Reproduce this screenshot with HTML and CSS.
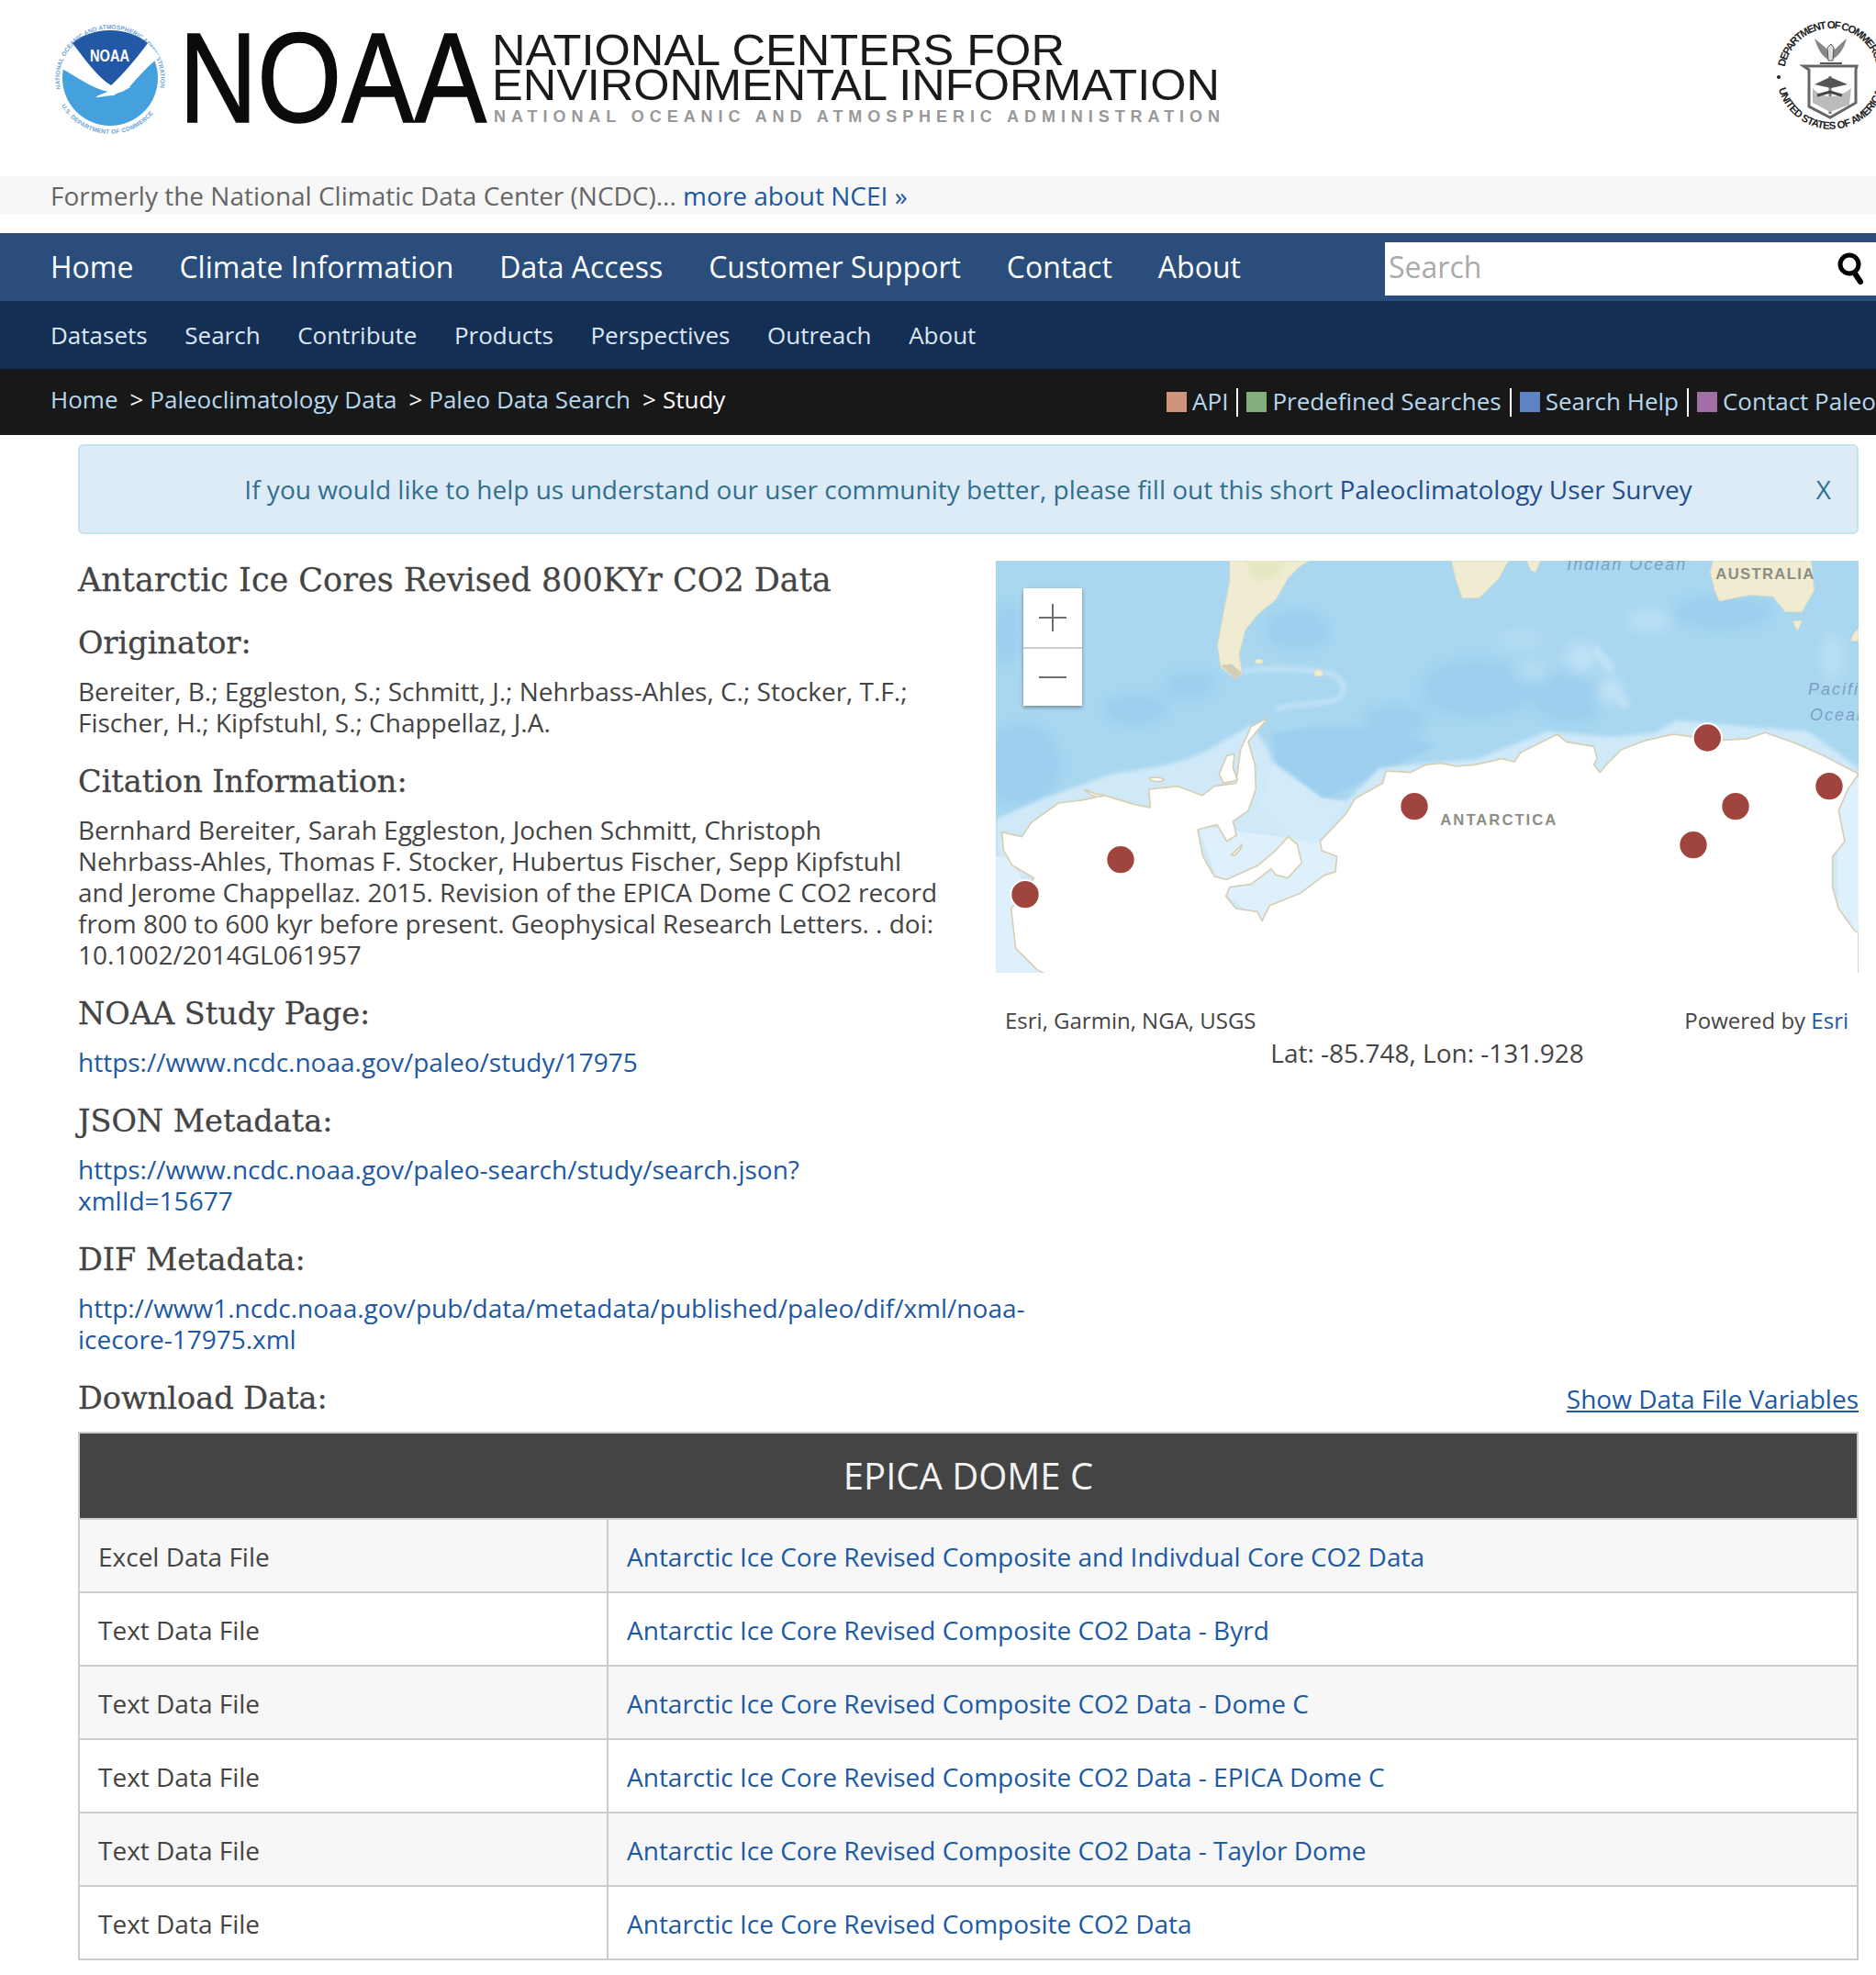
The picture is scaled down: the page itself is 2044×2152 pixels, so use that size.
FILE: index.html
```html
<!DOCTYPE html>
<html lang="en">
<head>
<meta charset="utf-8">
<title>Antarctic Ice Cores Revised 800KYr CO2 Data</title>
<link rel="stylesheet" href="styles.css">
</head>
<body>
<header class="masthead">
  <svg class="logo" viewBox="0 0 1340 192" width="1340" height="192" aria-label="NOAA National Centers for Environmental Information">
    <defs>
      <path id="noaaTop" d="M66 97 A55 55 0 1 1 174 97"/>
      <path id="noaaBot" d="M67 115 A61 61 0 0 0 173 115"/>
    </defs>
    <text class="ring"><textPath href="#noaaTop" textLength="192">NATIONAL OCEANIC AND ATMOSPHERIC ADMINISTRATION</textPath></text>
    <text class="ring"><textPath href="#noaaBot" textLength="118">U.S. DEPARTMENT OF COMMERCE</textPath></text>
    <circle cx="120" cy="85" r="52" fill="#45a1dd"/>
    <path d="M66 74 C78 44 98 33 120 33 C142 33 162 44 174 62 C163 70 152 82 140 96 C134 100 126 104 118 100 C100 96 84 84 66 74Z" fill="#fff"/>
    <path d="M79 47 C90 38 104 33 120 33 C136 33 150 38 161 47 C150 62 135 80 121 93 C106 84 92 64 79 47Z" fill="#2358a6"/>
    <path d="M104 106 C114 100 128 96 143 95 C134 98 128 101 124 104 C118 104 110 106 104 106Z" fill="#fff"/>
    <text class="noaa-mini" x="98" y="67" textLength="43" lengthAdjust="spacingAndGlyphs">NOAA</text>
    <text class="noaa-big" x="195" y="133" textLength="335" lengthAdjust="spacingAndGlyphs">NOAA</text>
    <text class="ncei" x="536" y="71" textLength="624" lengthAdjust="spacingAndGlyphs">NATIONAL CENTERS FOR</text>
    <text class="ncei" x="536" y="109" textLength="793" lengthAdjust="spacingAndGlyphs">ENVIRONMENTAL INFORMATION</text>
    <text class="noaa-sub" x="538" y="133" textLength="791">NATIONAL OCEANIC AND ATMOSPHERIC ADMINISTRATION</text>
  </svg>
  <svg class="seal" viewBox="0 0 109 192" width="109" height="192" aria-label="United States Department of Commerce">
    <defs>
      <path id="sealTop" d="M9.8 73 A51 51 0 0 1 110.2 73"/>
      <path id="sealBot" d="M3 97 A59 59 0 0 0 117 97"/>
    </defs>
    <text class="seal-text"><textPath href="#sealTop" textLength="140">DEPARTMENT OF COMMERCE</textPath></text>
    <text class="seal-text"><textPath href="#sealBot" textLength="152">UNITED STATES OF AMERICA</textPath></text>
    <circle cx="3" cy="84" r="2" fill="#222"/>
    <path d="M30 72 H88 L87 76 V112 L59 128 L36 116 V76Z" fill="#fff" stroke="#666" stroke-width="3"/>
    <path d="M59 83 V124" stroke="#777" stroke-width="3"/>
    <path d="M42 92 L59 84 L78 92 L60 96Z" fill="#555"/>
    <path d="M40 96 C50 108 68 108 82 96 L80 114 L59 122 L40 112Z" fill="#bbb"/>
    <path d="M45 104 L59 100 L72 104" stroke="#444" stroke-width="3" fill="none"/>
    <path d="M42 42 C46 54 50 62 59 66 C68 62 74 54 77 42 C72 46 68 50 64 54 L60 48 L56 54 C52 50 47 46 42 42Z" fill="#888"/>
    <path d="M56 52 L60 48 L63 52 L62 66 H57Z" fill="#ddd" stroke="#555"/>
    <path d="M48 69 H72" stroke="#555" stroke-width="2"/>
  </svg>
</header>
<div class="formerly">Formerly the National Climatic Data Center (NCDC)... <a href="#">more about NCEI »</a></div>
<nav class="nav-main">
  <ul class="nav-main-list">
    <li>Home</li><li>Climate Information</li><li>Data Access</li><li>Customer Support</li><li>Contact</li><li>About</li>
  </ul>
  <div class="search-box">
    <span class="search-label">Search</span>
    <svg class="search-icon" viewBox="0 0 30 36" width="30" height="36" aria-hidden="true">
      <circle cx="13" cy="13" r="10" fill="none" stroke="#000" stroke-width="5"/>
      <path d="M19 23 L25 32" stroke="#000" stroke-width="6" stroke-linecap="round"/>
    </svg>
  </div>
</nav>
<nav class="nav-sub">
  <span>Datasets</span><span>Search</span><span>Contribute</span><span>Products</span><span>Perspectives</span><span>Outreach</span><span>About</span>
</nav>
<nav class="crumbs">
  <div class="crumb-list">
    <a href="#">Home</a><span class="gt">&gt;</span><a href="#">Paleoclimatology Data</a><span class="gt">&gt;</span><a href="#">Paleo Data Search</a><span class="gt">&gt;</span><span class="current">Study</span>
  </div>
  <div class="quick-links">
    <a href="#"><i class="sq sq-api"></i>API</a><a href="#"><i class="sq sq-pre"></i>Predefined Searches</a><a href="#"><i class="sq sq-help"></i>Search Help</a><a href="#"><i class="sq sq-contact"></i>Contact Paleo</a>
  </div>
</nav>
<main class="content">
  <div class="alert">
    <span class="alert-text">If you would like to help us understand our user community better, please fill out this short <a href="#">Paleoclimatology User Survey</a></span>
    <span class="alert-close">X</span>
  </div>
  <div class="columns">
    <section class="info">
      <h1>Antarctic Ice Cores Revised 800KYr CO2 Data</h1>
      <h2>Originator:</h2>
      <p>Bereiter, B.; Eggleston, S.; Schmitt, J.; Nehrbass-Ahles, C.; Stocker, T.F.; Fischer, H.; Kipfstuhl, S.; Chappellaz, J.A.</p>
      <h2>Citation Information:</h2>
      <p>Bernhard Bereiter, Sarah Eggleston, Jochen Schmitt, Christoph Nehrbass-Ahles, Thomas F. Stocker, Hubertus Fischer, Sepp Kipfstuhl and Jerome Chappellaz. 2015. Revision of the EPICA Dome C CO2 record from 800 to 600 kyr before present. Geophysical Research Letters. . doi: 10.1002/2014GL061957</p>
      <h2>NOAA Study Page:</h2>
      <p><a href="#">https://www.ncdc.noaa.gov/paleo/study/17975</a></p>
      <h2>JSON Metadata:</h2>
      <p><a href="#">https://www.ncdc.noaa.gov/paleo-search/study/search.json?xmlId=15677</a></p>
      <h2>DIF Metadata:</h2>
      <p><a href="#">http://www1.ncdc.noaa.gov/pub/data/metadata/published/paleo/dif/xml/noaa-icecore-17975.xml</a></p>
    </section>
    <aside class="map-col">
      <div class="map">
        <svg class="map-art" viewBox="0 0 940 449" width="940" height="449" role="img" aria-label="Map of Antarctica with study sites">
          <defs>
            <filter id="soft" x="-30%" y="-30%" width="160%" height="160%"><feGaussianBlur stdDeviation="24"/></filter>
            <filter id="softer" x="-20%" y="-20%" width="140%" height="140%"><feGaussianBlur stdDeviation="7"/></filter>
          </defs>
          <rect width="940" height="449" fill="#a9d7f0"/>
          <g transform="translate(-15,-11) scale(.33333)">
            <g filter="url(#soft)" fill="#9ccfee">
              <ellipse cx="130" cy="700" rx="130" ry="140"/>
              <ellipse cx="500" cy="520" rx="110" ry="55"/>
              <ellipse cx="680" cy="440" rx="90" ry="50"/>
              <ellipse cx="1030" cy="260" rx="110" ry="70"/>
              <ellipse cx="80" cy="270" rx="50" ry="110"/>
              <ellipse cx="1620" cy="450" rx="190" ry="100"/>
              <ellipse cx="1920" cy="480" rx="120" ry="90"/>
              <ellipse cx="2420" cy="200" rx="170" ry="60"/>
              <ellipse cx="1350" cy="560" rx="110" ry="60"/>
            </g>
            <path filter="url(#softer)" d="M950 600 C1100 560 1300 560 1480 640 L1230 760 L1120 810 L960 700Z" fill="#9ccfee"/>
            <g filter="url(#soft)" fill="#bfe2f5">
              <ellipse cx="1960" cy="350" rx="50" ry="50"/>
              <ellipse cx="2050" cy="460" rx="40" ry="50"/>
              <ellipse cx="1760" cy="290" rx="70" ry="14"/>
              <ellipse cx="1790" cy="395" rx="50" ry="20"/>
              <ellipse cx="2180" cy="230" rx="70" ry="26"/>
              <ellipse cx="2780" cy="350" rx="26" ry="80"/>
            </g>
            <g filter="url(#softer)" fill="none" stroke="#bfe1f5">
              <path d="M850 395 C920 380 1060 385 1130 400 C1190 420 1200 470 1150 490 C1090 505 1000 500 960 520" stroke-width="18"/>
              <path d="M2000 320 L2060 390 M2050 440 L2110 510" stroke-width="30"/>
            </g>
            <path filter="url(#softer)" d="M45 880 C200 800 300 780 420 730 C560 710 700 690 790 620 L880 570 L930 640 L950 690 L1110 810 L1190 820 L1300 710 L1500 690 L1620 680 L1850 590 L2050 610 L2200 595 L2270 555 L2500 575 L2700 590 L2865 710 L2865 1400 L45 1400Z" fill="#cfe9f8"/>
            <path d="M45 1000 L100 1000 L240 1380 L45 1380Z M705 900 L1170 960 L1160 1060 L920 1220 L780 1110Z" fill="#def0fb"/>
            <path d="M2790 760 L2865 740 L2865 1250 L2800 1210Z" fill="#def0fb"/>
            <path d="M905 840 L1000 935 L1070 960 L1105 950 L1190 820 L1110 810 L950 700Z" fill="#d2eaf9" opacity=".8"/>
            <path class="land" d="M65 920 L130 935 L160 890 L250 825 L330 815 L400 800 L500 830 L550 840 L545 780 L640 770 L720 800 L760 770 L830 760 L845 650 L880 575 L935 545 L870 625 L892 700 L895 780 L870 850 L820 885 L832 930 L800 950 L768 895 L705 912 L722 1000 L760 1065 L800 1075 L900 1030 L960 980 L1000 935 L1030 960 L1045 1020 L1000 1070 L960 1060 L945 1040 L880 1090 L810 1100 L797 1130 L830 1170 L900 1180 L915 1210 L940 1160 L1040 1120 L1120 1060 L1155 1050 L1160 1000 L1110 980 L1105 950 L1190 860 L1220 810 L1310 760 L1320 720 L1400 725 L1450 700 L1500 695 L1550 705 L1610 700 L1700 680 L1740 690 L1760 660 L1840 620 L1880 600 L1910 625 L2000 640 L2010 680 L2000 700 L2020 725 L2040 700 L2090 650 L2170 620 L2260 600 L2330 610 L2410 620 L2500 615 L2560 595 L2660 630 L2750 670 L2865 730 L2830 780 L2800 850 L2820 950 L2780 1000 L2780 1100 L2800 1170 L2850 1240 L2865 1250 L2865 1400 L240 1400 L180 1370 L110 1300 L95 1170 L170 1070 L100 1030 L70 980Z"/>
            <g class="land">
              <path d="M335 780 C350 800 380 810 400 800 L370 795Z"/>
              <path d="M545 745 C560 738 590 742 595 750 C580 758 555 756 545 745Z"/>
              <path d="M775 730 L800 670 L825 665 L820 710 L835 750 L790 760Z"/>
              <path d="M815 995 L850 960 L845 975 L825 997Z"/>
            </g>
            <path class="continent" d="M810 33 L1070 33 L1040 50 L1000 90 L960 160 L900 210 L860 260 L840 340 L850 400 L830 420 L780 380 L770 310 L790 200 L810 100Z"/>
            <path d="M860 33 L1000 33 L960 90 L890 100Z" fill="#dde4b6" opacity=".5" filter="url(#softer)"/>
            <path d="M780 375 L815 370 L850 400 L830 420Z" fill="#d5ceb6"/>
            <ellipse class="continent" cx="905" cy="362" rx="13" ry="7"/>
            <ellipse class="continent" cx="1100" cy="400" rx="14" ry="10"/>
            <path class="continent" d="M1535 33 L1720 33 L1690 90 L1625 155 L1570 155 L1550 100Z"/>
            <path class="continent" d="M1780 33 L1825 33 L1810 70 L1795 65Z"/>
            <path class="continent" d="M2390 33 L2710 33 L2720 130 L2680 200 L2625 200 L2585 150 L2510 145 L2410 165 L2395 130 L2380 70Z"/>
            <path class="continent" d="M2650 230 L2680 230 L2665 262Z"/>
            <path class="continent" d="M2865 255 L2865 295 L2840 295 L2850 270Z"/>
            <text class="label-sea" x="1912" y="62">Indian Ocean</text>
            <text class="label-land" x="2398" y="94">AUSTRALIA</text>
            <text class="label-land label-wide" x="1498" y="897">ANTARCTICA</text>
            <text class="label-sea" x="2700" y="470">Pacific</text>
            <text class="label-sea" x="2706" y="555">Ocean</text>
            <circle class="pin pin-hi" cx="141" cy="1124" r="47"/>
            <circle class="pin" cx="453" cy="1010" r="44"/>
            <circle class="pin" cx="1413" cy="836" r="44"/>
            <circle class="pin pin-hi" cx="2371" cy="612" r="47"/>
            <circle class="pin" cx="2463" cy="836" r="44"/>
            <circle class="pin" cx="2325" cy="962" r="44"/>
            <circle class="pin" cx="2769" cy="770" r="44"/>
          </g>
        </svg>
        <div class="zoom-control">
          <div class="zoom-btn"><svg viewBox="0 0 30 30" width="30" height="30" aria-hidden="true"><path d="M0 15H30M15 0V30" stroke="#6e6e6e" stroke-width="2"/></svg></div>
          <div class="zoom-btn"><svg viewBox="0 0 30 30" width="30" height="30" aria-hidden="true"><path d="M0 15H30" stroke="#6e6e6e" stroke-width="2"/></svg></div>
        </div>
      </div>
      <div class="attribution"><span>Esri, Garmin, NGA, USGS</span><span>Powered by <a href="#">Esri</a></span></div>
      <div class="latlon">Lat: -85.748, Lon: -131.928</div>
    </aside>
  </div>
  <div class="download-head">
    <h2>Download Data:</h2>
    <a class="show-vars" href="#">Show Data File Variables</a>
  </div>
  <table class="files">
    <colgroup><col class="col-type"><col></colgroup>
    <thead><tr><th colspan="2">EPICA DOME C</th></tr></thead>
    <tbody>
      <tr><td>Excel Data File</td><td><a href="#">Antarctic Ice Core Revised Composite and Indivdual Core CO2 Data</a></td></tr>
      <tr><td>Text Data File</td><td><a href="#">Antarctic Ice Core Revised Composite CO2 Data - Byrd</a></td></tr>
      <tr><td>Text Data File</td><td><a href="#">Antarctic Ice Core Revised Composite CO2 Data - Dome C</a></td></tr>
      <tr><td>Text Data File</td><td><a href="#">Antarctic Ice Core Revised Composite CO2 Data - EPICA Dome C</a></td></tr>
      <tr><td>Text Data File</td><td><a href="#">Antarctic Ice Core Revised Composite CO2 Data - Taylor Dome</a></td></tr>
      <tr><td>Text Data File</td><td><a href="#">Antarctic Ice Core Revised Composite CO2 Data</a></td></tr>
    </tbody>
  </table>
</main>
</body>
</html>
```
FILE: styles.css
```css
* { box-sizing: border-box; }
html, body { margin: 0; padding: 0; background: #fff; overflow-x: hidden; }
body { width: 2044px; font-family: "Open Sans", "Noto Sans", sans-serif; font-size: 28px; line-height: 34px; color: #444; }
a { color: #2058a3; text-decoration: none; }

.masthead { display: flex; justify-content: space-between; height: 192px; }
.logo, .seal { display: block; flex: none; }
.ring { font: 700 6.6px "Liberation Sans", sans-serif; fill: #6fa3d4; }
.noaa-mini { font: 700 19px "Liberation Sans", sans-serif; fill: #fff; }
.noaa-big { font: 400 139px "Liberation Sans", sans-serif; fill: #0a0b0c; stroke: #0a0b0c; stroke-width: 1.5px; }
.ncei { font: 400 49px "Liberation Sans", sans-serif; fill: #1a1a1a; }
.noaa-sub { font: 700 18px "Liberation Sans", sans-serif; fill: #999; }
.seal-text { font: 700 11.5px "Liberation Sans", sans-serif; fill: #222; }

.formerly { height: 41px; margin-bottom: 21px; padding-left: 55px; background: #f7f7f7; font-size: 28px; line-height: 42px; color: #666; }

.nav-main { display: flex; justify-content: space-between; align-items: center; height: 74px; background: #2a4d7c; }
.nav-main-list { display: flex; gap: 50px; margin: 0; padding: 0 0 0 55px; list-style: none; font-size: 32px; color: #fff; }
.search-box { display: flex; justify-content: space-between; align-items: center; width: 535px; height: 58px; margin-top: 4px; padding: 0 0 4px 4px; background: #fff; }
.search-label { font-size: 32px; color: #aaa; }
.search-icon { margin: 4px 12px 0 0; }

.nav-sub { display: flex; gap: 40.6px; align-items: center; height: 74px; padding-left: 55px; background: #152e54; font-size: 26px; color: #dbe6f2; }

.crumbs { display: flex; justify-content: space-between; align-items: center; height: 72px; padding-left: 55px; background: #181818; font-size: 26px; white-space: nowrap; overflow: hidden; }
.crumbs a { color: #b5d8ef; }
.crumb-list { display: flex; align-items: center; margin-top: -6px; }
.gt { margin: 0 7px 0 13px; color: #fff; }
.current { color: #fff; }
.quick-links { display: flex; align-items: center; flex: none; }
.quick-links a { display: flex; align-items: center; height: 31px; padding-right: 9px; padding-bottom: 3px; margin-right: 9px; border-right: 2px solid #fff; }
.quick-links a:last-child { border-right: 0; padding-right: 0; margin-right: 0; }
.sq { display: block; width: 22px; height: 22px; margin: 3px 6px 0 0; }
.sq-api { background: #cf957a; }
.sq-pre { background: #81ae79; }
.sq-help { background: #5f82c4; }
.sq-contact { background: #a16fa6; }

.content { padding: 10px 19px 0 85px; }
.alert { display: flex; justify-content: center; align-items: center; position: relative; height: 98px; margin-bottom: 29px; background: #ddebf7; border: 2px solid #c3e3ef; border-radius: 6px; color: #31708f; }
.alert a { color: #1f4f8f; }
.alert-close { position: absolute; right: 28px; top: 30px; }

.columns { display: flex; gap: 50px; }
.info { flex: none; width: 950px; }
h1, h2 { margin: 0; font-family: "DejaVu Serif", serif; font-weight: 400; color: #444; line-height: 42px; -webkit-text-stroke: .3px #444; }
h1 { font-size: 35px; margin-bottom: 27px; }
h2 { font-size: 33.5px; margin: 27px 0 14px; }
h1 + h2 { margin-top: 0; }
p { margin: 0; }

.map-col { flex: none; width: 940px; }
.map { position: relative; height: 449px; }
.map-art { display: block; }
.land { fill: #fff; stroke: #d6cfb4; stroke-width: 5; stroke-linejoin: round; }
.continent { fill: #efecd2; stroke: #e3dcc0; stroke-width: 3; stroke-linejoin: round; }
.label-sea { font: italic 400 54px "Liberation Sans", sans-serif; fill: #7d9fc6; letter-spacing: 6px; }
.label-land { font: 700 50px "Liberation Sans", sans-serif; fill: #8d8d84; letter-spacing: 4px; }
.label-wide { letter-spacing: 6px; }
.pin { fill: #a0453e; }
.pin-hi { stroke: #fff; stroke-width: 6; }
.zoom-control { position: absolute; left: 30px; top: 30px; width: 64px; box-shadow: 0 2px 4px rgba(0,0,0,.35); }
.zoom-btn { display: flex; justify-content: center; align-items: center; height: 64px; background: #fff; }
.zoom-btn + .zoom-btn { border-top: 2px solid #ccc; }
.attribution { display: flex; justify-content: space-between; padding: 35px 11px 0 10px; font-size: 24px; }
.latlon { margin-top: 1px; text-align: center; }

.download-head { display: flex; justify-content: space-between; align-items: flex-start; }
.download-head h2 { margin: 27px 0 15px; }
.show-vars { margin-top: 31px; text-decoration: underline; }

.files { width: 1940px; border-collapse: collapse; table-layout: fixed; }
.col-type { width: 576px; }
.files th { height: 94px; border: 2px solid #ccc; background: #444; color: #f2f2f2; font-size: 40px; font-weight: 400; }
.files td { height: 80px; padding: 2px 20px 0; border: 2px solid #ccc; }
.files tbody tr:nth-child(odd) { background: #f7f7f7; }
```
